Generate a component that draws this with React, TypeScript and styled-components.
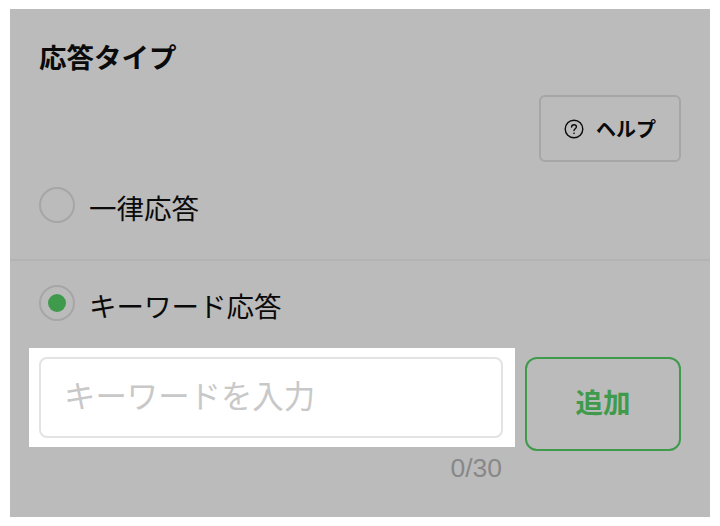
import React from 'react';
import styled, { createGlobalStyle } from 'styled-components';

const GlobalStyle = createGlobalStyle`
  html, body {
    margin: 0;
    padding: 0;
    background: #fff;
    font-family: "Liberation Sans", "Noto Sans CJK JP", sans-serif;
  }
`;

const Panel = styled.div`
  width: 700px;
  height: 508px;
  margin: 9px 0 0 10px;
  background: #bbbbbb;
  box-sizing: border-box;
`;

const TopSection = styled.section`
  height: 252px;
  box-sizing: border-box;
  padding: 29px 29px 0 29px;
  border-bottom: 2px solid #b3b3b3;
`;

const Title = styled.h2`
  margin: 0;
  font-size: 27.5px;
  line-height: 42px;
  font-weight: 700;
  color: #0a0a0a;
`;

const HelpRow = styled.div`
  display: flex;
  justify-content: flex-end;
  margin-top: 15px;
`;

const HelpButton = styled.button`
  display: flex;
  align-items: center;
  justify-content: center;
  gap: 12px;
  width: 142px;
  height: 67px;
  padding: 0;
  background: transparent;
  border: 2px solid #a6a6a6;
  border-radius: 6px;
  font-family: inherit;
  font-size: 20px;
  font-weight: 700;
  color: #0a0a0a;
`;

const Option = styled.label<{ $top: number }>`
  display: flex;
  align-items: flex-start;
  gap: 14px;
  height: 36px;
  margin-top: ${props => props.$top}px;
  font-size: 27.5px;
  line-height: 36px;
  color: #0a0a0a;
`;

const OptionText = styled.span`
  padding-top: 5px;
`;

const Radio = styled.span`
  display: flex;
  align-items: center;
  justify-content: center;
  width: 36px;
  height: 36px;
  box-sizing: border-box;
  border: 2px solid #a6a6a6;
  border-radius: 50%;
`;

const RadioDot = styled.span`
  width: 18px;
  height: 18px;
  border-radius: 50%;
  background: #3f9a4c;
`;

const BottomSection = styled.section`
  padding: 24px 29px 0 29px;
`;

const InputRow = styled.div`
  display: flex;
  align-items: flex-start;
  gap: 22px;
  margin-top: 27px;
`;

const InputColumn = styled.div`
  flex: 0 0 464px;
`;

const Highlight = styled.div`
  margin: 0 -12px 0 -10px;
  padding: 9px 12px 9px 10px;
  background: #fff;
`;

const KeywordInput = styled.input`
  display: block;
  width: 100%;
  height: 81px;
  box-sizing: border-box;
  padding: 0 23px;
  background: #fff;
  border: 2px solid #e3e3e3;
  border-radius: 8px;
  outline: none;
  font-family: inherit;
  font-size: 31.4px;
  color: #0a0a0a;

  &::placeholder {
    color: #c8c8c8;
    opacity: 1;
  }
`;

const Counter = styled.div`
  margin-top: 8px;
  padding-right: 1px;
  text-align: right;
  font-size: 26.5px;
  line-height: 26px;
  color: #888888;
`;

const AddButton = styled.button`
  flex: 0 0 156px;
  height: 94px;
  margin-top: 9px;
  padding: 0 0 7px 0;
  background: transparent;
  border: 2px solid #3f9a4c;
  border-radius: 12px;
  font-family: inherit;
  font-size: 27.5px;
  font-weight: 700;
  color: #3f9a4c;
`;

const HelpIcon = () => (
  <svg width="20" height="20" viewBox="0 0 20 20" fill="none" stroke="#0a0a0a" strokeWidth="1.4">
    <circle cx="10" cy="10" r="8.8" />
    <path d="M7.6 8c0-1.4 1.1-2.3 2.4-2.3s2.4.9 2.4 2.1c0 1.9-2.4 1.9-2.4 3.8" strokeLinecap="round" />
    <circle cx="10" cy="14.2" r="0.5" fill="#0a0a0a" strokeWidth="0.6" />
  </svg>
);

const App: React.FC = () => (
  <>
    <GlobalStyle />
    <Panel>
      <TopSection>
        <Title>応答タイプ</Title>
        <HelpRow>
          <HelpButton>
            <HelpIcon />
            ヘルプ
          </HelpButton>
        </HelpRow>
        <Option $top={25}>
          <Radio />
          <OptionText>一律応答</OptionText>
        </Option>
      </TopSection>
      <BottomSection>
        <Option $top={0}>
          <Radio>
            <RadioDot />
          </Radio>
          <OptionText>キーワード応答</OptionText>
        </Option>
        <InputRow>
          <InputColumn>
            <Highlight>
              <KeywordInput placeholder="キーワードを入力" />
            </Highlight>
            <Counter>0/30</Counter>
          </InputColumn>
          <AddButton>追加</AddButton>
        </InputRow>
      </BottomSection>
    </Panel>
  </>
);

export default App;
